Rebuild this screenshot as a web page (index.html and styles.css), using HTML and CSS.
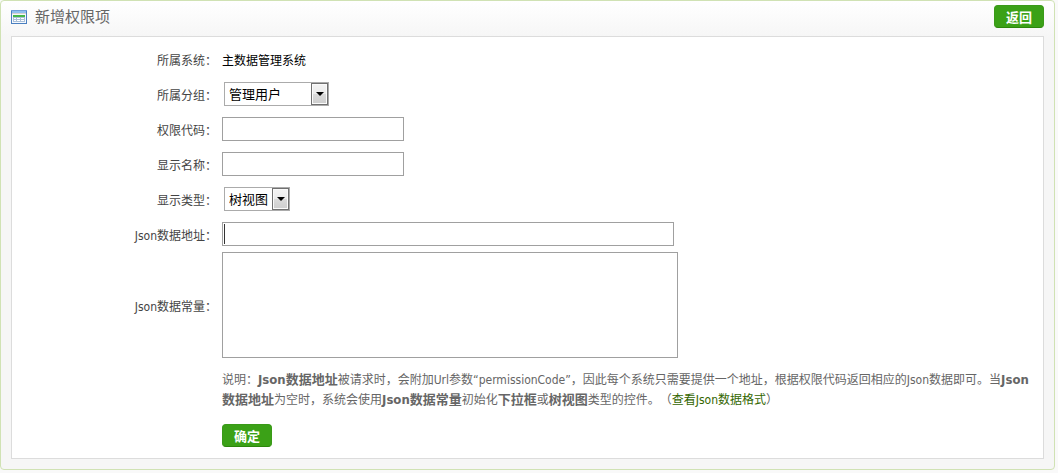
FILE: index.html
```html
<!DOCTYPE html>
<html lang="zh-CN">
  <head>
    <meta charset="UTF-8" />
    <meta name="viewport" content="width=device-width, initial-scale=1.0" />
    <title>新增权限项</title>
    <link rel="stylesheet" href="styles.css">
  </head>
  <body>
    <div class="box">
      <div class="box-header">
        <svg class="icon" width="16" height="14" viewBox="0 0 16 14" shape-rendering="crispEdges">
          <rect width="16" height="14" fill="#4a7fc0" />
          <rect y="0" width="16" height="1" fill="#6f9fd8" />
          <rect x="1" y="1" width="14" height="2" fill="#8fc0f0" />
          <rect x="1" y="3" width="14" height="10" fill="#f4f8fd" />
          <rect x="1" y="3" width="14" height="1" fill="#d8cfd0" />
          <rect x="2" y="5" width="12" height="2" fill="#45b649" />
          <rect x="2" y="7" width="12" height="5" fill="#a9bfd8" />
          <path d="M3 8h2v1h-2zM6 8h3v1h-3zM10 8h3v1h-3zM3 10h2v1h-2zM6 10h3v1h-3zM10 10h3v1h-3z" fill="#fff" />
        </svg>
        <h1>新增权限项</h1>
        <button type="button" class="btn">返回</button>
      </div>

      <form class="box-content">
        <div class="row">
          <span class="label">所属系统：</span>
          <span class="value">主数据管理系统</span>
        </div>
        <div class="row">
          <label class="label" for="group">所属分组：</label>
          <span class="select select-group">
            <select id="group">
              <option>管理用户</option>
            </select>
          </span>
        </div>
        <div class="row">
          <label class="label" for="code">权限代码：</label>
          <input type="text" id="code" class="text" />
        </div>
        <div class="row">
          <label class="label" for="name">显示名称：</label>
          <input type="text" id="name" class="text" />
        </div>
        <div class="row">
          <label class="label" for="type">显示类型：</label>
          <span class="select select-type">
            <select id="type">
              <option>树视图</option>
            </select>
          </span>
        </div>
        <div class="row">
          <label class="label" for="jsonUrl">Json数据地址：</label>
          <input type="text" id="jsonUrl" class="text text-long active" />
        </div>
        <div class="row row-area">
          <label class="label" for="jsonData">Json数据常量：</label>
          <textarea id="jsonData" class="area"></textarea>
        </div>
        <div class="footer">
          <p>说明：<strong>Json数据地址</strong>被请求时，会附加Url参数“permissionCode”，因此每个系统只需要提供一个地址，根据权限代码返回相应的Json数据即可。当<strong>Json数据地址</strong>为空时，系统会使用<strong>Json数据常量</strong>初始化<strong>下拉框</strong>或<strong>树视图</strong>类型的控件。（<a href="#">查看Json数据格式</a>）</p>
          <button type="submit" class="btn">确定</button>
        </div>
      </form>
    </div>
  </body>
</html>
```
FILE: styles.css
```css
body {
  margin: 0 3px 3px 0;
  background: #f9f9f9;
  color: #444;
  font: 12px/20px "DejaVu Sans Condensed", "Noto Sans CJK SC", sans-serif;
  text-spacing-trim: space-all;
}
*,
*::before {
  box-sizing: border-box;
}
.box {
  padding: 0 10px 10px;
  background: #f6f6f6 linear-gradient(#fff, #f6f6f6) no-repeat 0 0 / 100% 36px;
  border: 1px solid #d0e2b4;
  border-radius: 4px;
}
.box-header {
  display: flex;
  align-items: center;
  height: 35px;
  padding-bottom: 4px;
}
.icon {
  margin-right: 8px;
}
h1 {
  flex: 1;
  margin: 0;
  color: #666;
  font-size: 15px;
  font-weight: normal;
}
.btn {
  width: 50px;
  height: 23px;
  padding: 0;
  background: #3ba117;
  border: 1px solid #3a9a18;
  border-bottom-color: #2c860c;
  border-radius: 4px;
  color: #fff;
  font: bold 13px/20px "Noto Sans CJK SC", sans-serif;
  cursor: pointer;
}
.box-content {
  padding: 5px 12px 11px 0;
  background: #fff;
  border: 1px solid #dcdcdc;
}
.row {
  display: flex;
  align-items: center;
  height: 35px;
  padding: 5px 0 6px;
}
.row-area {
  height: auto;
  padding: 0;
}
.label,
.value {
  padding-top: 3px;
}
.label {
  flex: none;
  width: 210px;
  padding-right: 5px;
  text-align: right;
}
.value {
  color: #000;
}
.text,
.area {
  margin: 0;
  padding: 2px 4px;
  background: #fff;
  border: 1px solid #a0a0a0;
  border-radius: 0;
  font: inherit;
  outline: none;
}
.text {
  width: 182px;
  height: 24px;
}
.text-long {
  width: 452px;
}
.active {
  background: linear-gradient(#333, #333) no-repeat 1px 1px / 1px 20px #fff;
}
.area {
  width: 456px;
  height: 106px;
  resize: none;
}
.select {
  position: relative;
  height: 24px;
  margin-left: 2px;
}
.select-group {
  width: 105px;
}
.select-type {
  width: 66px;
}
.select select {
  width: 100%;
  height: 24px;
  padding: 0 18px 0 4px;
  appearance: none;
  background: #fff;
  border: 1px solid #ababab;
  border-radius: 0;
  color: #000;
  font: 13px/20px "Noto Sans CJK SC", sans-serif;
}
.select::before {
  content: "";
  position: absolute;
  top: 1px;
  right: 1px;
  width: 17px;
  height: 22px;
  background: linear-gradient(#f3f3f3, #ebebeb 50%, #dadada 50%, #cdcdcd);
  border: 1px solid #707070;
  box-shadow: inset 0 0 0 1px #fafafa;
  pointer-events: none;
}
.select::after {
  content: "";
  position: absolute;
  top: 10px;
  right: 5px;
  border: 4px solid transparent;
  border-top-color: #000;
  border-bottom: 0;
  pointer-events: none;
}
.footer {
  padding: 12px 0 0 210px;
}
.footer p {
  margin: 0 0 14px;
  color: #666;
}
.footer strong {
  font-size: 13px;
}
.footer .btn {
  display: block;
}
a {
  color: #360;
  text-decoration: none;
}
```
